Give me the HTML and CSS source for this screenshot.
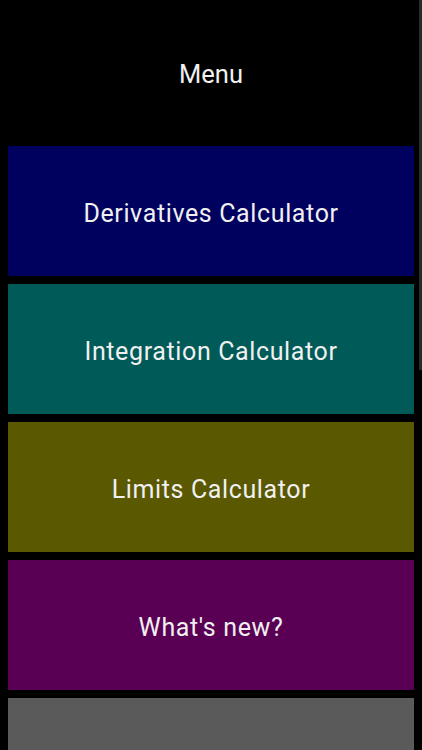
FILE: index.html
```html
<!DOCTYPE html>
<html>
<head>
<meta charset="utf-8">
<link rel="stylesheet" href="styles.css">
</head>
<body>
<div class="screen">
  <header class="title">Menu</header>
  <nav class="menu">
    <div class="item derivatives">Derivatives Calculator</div>
    <div class="item integration">Integration Calculator</div>
    <div class="item limits">Limits Calculator</div>
    <div class="item whatsnew">What's new?</div>
    <div class="item more"></div>
  </nav>
  <div class="scrollbar"></div>
</div>
</body>
</html>
```
FILE: styles.css
```css
html, body {
  margin: 0;
  padding: 0;
  background: #000;
  overflow: hidden;
}
.screen {
  width: 422px;
  height: 750px;
  position: relative;
  overflow: hidden;
  font-family: Roboto, "Liberation Sans", sans-serif;
  color: #f0f0f0;
}
.title {
  height: 146px;
  display: flex;
  align-items: center;
  justify-content: center;
  font-size: 25.5px;
  padding-top: 2px;
  box-sizing: border-box;
}
.menu {
  display: flex;
  flex-direction: column;
  gap: 8px;
  padding: 0 8px;
}
.item {
  height: 130px;
  display: flex;
  align-items: center;
  justify-content: center;
  font-size: 25px;
  letter-spacing: 0.025em;
  padding-top: 5px;
  box-sizing: border-box;
}
.derivatives { background: #00005e; }
.integration { background: #005a58; }
.limits { background: #5a5800; }
.whatsnew { background: #590054; }
.more { background: #5a5a5a; }
.scrollbar {
  position: absolute;
  top: 0;
  right: 0;
  width: 3px;
  height: 370px;
  background: #2a2a2a;
}
```
